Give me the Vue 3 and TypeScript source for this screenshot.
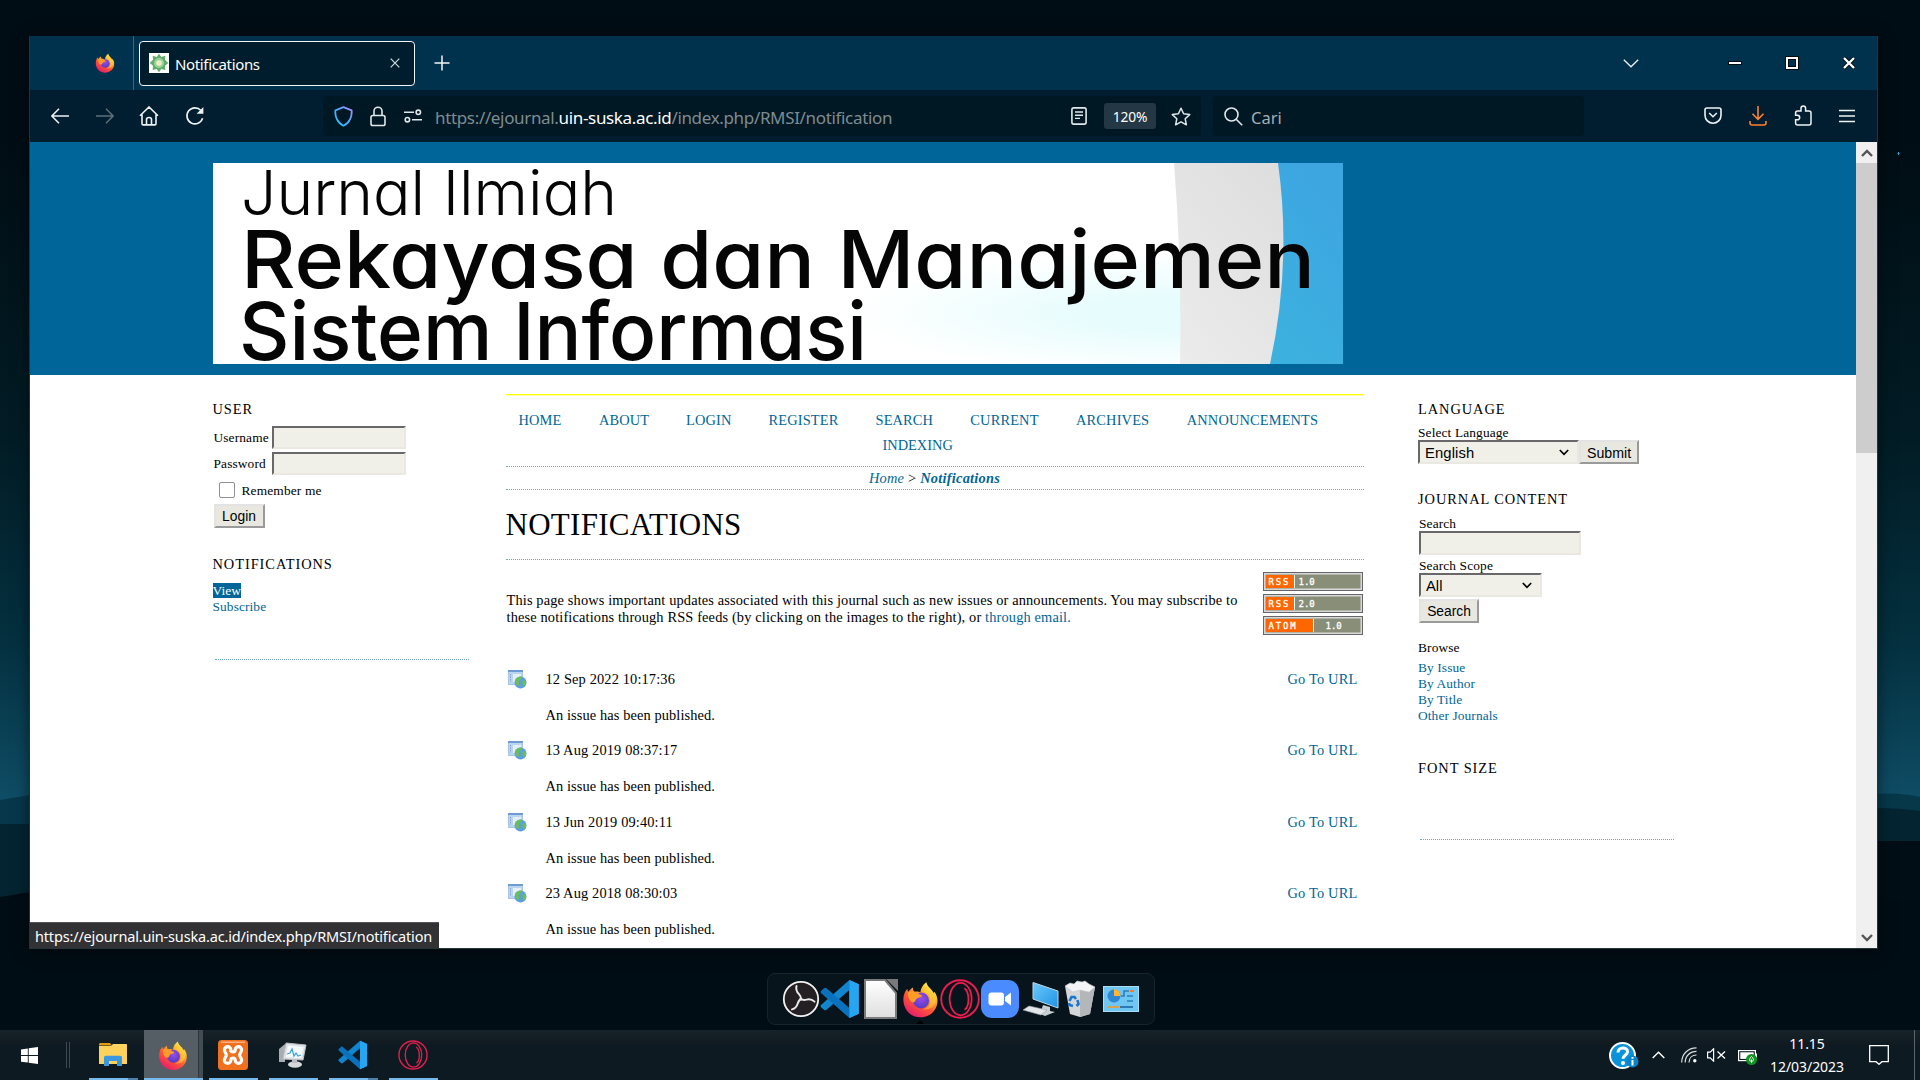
<script setup lang="ts">
interface NavItem {
  label: string
  gap: number
}

const navItems: NavItem[] = [
  { label: 'HOME', gap: 37.4 },
  { label: 'ABOUT', gap: 36.8 },
  { label: 'LOGIN', gap: 37 },
  { label: 'REGISTER', gap: 37 },
  { label: 'SEARCH', gap: 37.2 },
  { label: 'CURRENT', gap: 37.5 },
  { label: 'ARCHIVES', gap: 37.5 },
  { label: 'ANNOUNCEMENTS', gap: 0 },
]

const entries: string[] = [
  '12 Sep 2022 10:17:36',
  '13 Aug 2019 08:37:17',
  '13 Jun 2019 09:40:11',
  '23 Aug 2018 08:30:03',
]

const browseLinks: string[] = ['By Issue', 'By Author', 'By Title', 'Other Journals']

const feeds = [
  { name: 'RSS', version: '1.0', atom: false },
  { name: 'RSS', version: '2.0', atom: false },
  { name: 'ATOM', version: '1.0', atom: true },
]
</script>

<template>
  <div class="desktop">
    <!-- shared gradients and logos -->
    <svg class="defs" width="0" height="0" aria-hidden="true">
      <defs>
        <linearGradient id="ffBody" x1="0.85" y1="0.05" x2="0.25" y2="1">
          <stop offset="0" stop-color="#fff44f" />
          <stop offset="0.3" stop-color="#ffb02e" />
          <stop offset="0.6" stop-color="#ff5634" />
          <stop offset="1" stop-color="#e5186f" />
        </linearGradient>
        <radialGradient id="ffCore" cx="0.5" cy="0.35" r="0.7">
          <stop offset="0" stop-color="#a04ae8" />
          <stop offset="1" stop-color="#4a3cc4" />
        </radialGradient>
        <linearGradient id="shieldGrad" x1="0" y1="1" x2="1" y2="0">
          <stop offset="0" stop-color="#28c8f8" />
          <stop offset="0.5" stop-color="#4aa6ff" />
          <stop offset="1" stop-color="#b48cff" />
        </linearGradient>
        <linearGradient id="paper" x1="0" y1="0" x2="0" y2="1">
          <stop offset="0" stop-color="#ffffff" />
          <stop offset="1" stop-color="#dedede" />
        </linearGradient>
        <linearGradient id="sky" x1="0" y1="0" x2="1" y2="1">
          <stop offset="0" stop-color="#6cc8fa" />
          <stop offset="1" stop-color="#1f93e6" />
        </linearGradient>
        <symbol id="firefox" viewBox="0 0 32 32">
          <path d="M1.2 17C1 12 2.8 8.6 4.6 6.6c0 1.2.4 2.2 1 2.8C6.8 7.2 8.6 6.200 9.600 5.600c-.2 1.600.2 2.800 1.200 3.600 2-.4 4 0 5.200.6C16.200 6 18.600 2.600 21.200 1c.2 3.200 3.600 5 5.200 7.800.6.800.8 1 1 1.800l.6-1.400c2.200 3 3 6 2.600 9.600C29.800 26 23.600 31.400 16 31.400 8 31.400 1.600 25.200 1.200 17z" fill="url(#ffBody)" />
          <circle cx="16.500" cy="16.800" r="6.900" fill="url(#ffCore)" />
          <path d="M5.600 9.400c2-1 4-.6 5.200-.2 2 .4 3.600 1.200 4.200 2.200 2 .4 2.600 1.200 2 2-1 1-3.600.8-4.600 2.200-.8 1-.6 2-1.800 2.600C8 20 4 14 5.600 9.400z" fill="#ff9c28" />
          <path d="M18 9c3.600.6 6.200 3.600 6.400 7.400.2 4-2.200 7-6.400 8 5 1.200 11-2 11.200-8.400C29.300 11 24 6.500 21 4c1 2.500-1 4-3 5z" fill="#ffd63c" opacity="0.550" />
        </symbol>
        <symbol id="vscode" viewBox="0 0 32 32">
          <path d="M23.500.8 31 4.200v23.600l-7.500 3.400z" fill="#26a9f0" />
          <path d="M23.500.8v8L5.200 24.600c-.7.600-1.400.6-2 0L1 22.700c-.7-.7-.7-1.500 0-2.100z" fill="#1186cf" />
          <path d="M23.500 31.200v-8L5.200 7.400c-.7-.6-1.400-.6-2 0L1 9.300c-.7.700-.7 1.500 0 2.100z" fill="#0a72bd" />
          <path d="M23.500 31.200V.8L31 4.200v23.600z" fill="#26a5f0" />
        </symbol>
        <symbol id="opera" viewBox="0 0 32 32">
          <g fill="none" stroke="currentColor">
            <circle cx="16" cy="16" r="15" stroke-width="1.500" />
            <ellipse cx="16.500" cy="16" rx="8.800" ry="13" stroke-width="1.400" />
            <path d="M19.500 7.400c4 3 4.600 14 .2 17.200" stroke-width="1.400" />
          </g>
        </symbol>
      </defs>
    </svg>

    <!-- wallpaper hills -->
    <svg class="hills" width="1920" height="1080" viewBox="0 0 1920 1080" aria-hidden="true">
      <path d="M0 800 30 795V900H0z" fill="#07374a" />
      <path d="M0 824H30V930H0z" fill="#032430" />
      <path d="M0 897 30 892V960H0z" fill="#010d14" />
      <path d="M1876 794q24-2 44 3v60h-44z" fill="#06384a" />
      <path d="M1876 808q24 0 44 3v60h-44z" fill="#032430" />
      <path d="M1876 841h44v60h-44z" fill="#010e15" />
      <path d="M1897.500 153.500h2M1898.500 152v3" stroke="#1ba5cf" />
    </svg>

    <section class="window">
      <header class="titlebar">
        <svg class="tb-logo" width="20" height="20"><use href="#firefox" /></svg>
        <div class="tab">
          <svg width="20" height="20" viewBox="0 0 20 20">
            <rect width="20" height="20" fill="#fff" />
            <path d="M10 .8 12.300 4l4-1.200-.3 4L19.300 10 16 12.800l.3 4.300-4-1.100L10 19.200 7.700 16l-4 1.100.3-4.300L.7 10 4 6.800l-.3-4 4 1.200z" fill="#5fae6b" />
            <circle cx="10" cy="10" r="5" fill="#9fd09a" />
            <circle cx="10" cy="10" r="2.800" fill="#e9f0c4" />
          </svg>
          <span class="tab-title">Notifications</span>
          <svg class="tab-close" width="10" height="10" viewBox="0 0 10 10"><path d="M.7.7l8.600 8.600M9.300.7.7 9.300" stroke="#cfdbe2" stroke-width="1.200" /></svg>
        </div>
        <svg class="new-tab" width="16" height="16" viewBox="0 0 16 16"><path d="M8 .5v15M.5 8h15" stroke="#f2f6f8" stroke-width="1.500" /></svg>
        <div class="grow"></div>
        <svg class="tabs-menu" width="16" height="9" viewBox="0 0 16 9"><path d="M.8.8 8 7.800l7.200-7" fill="none" stroke="#e8eef2" stroke-width="1.400" /></svg>
        <svg class="win-min" width="14" height="14" viewBox="0 0 14 14"><rect x=".5" y="5.500" width="13" height="3" fill="#fff" stroke="#000b10" /></svg>
        <svg class="win-max" width="14" height="14" viewBox="0 0 14 14"><rect x="2" y="2" width="10" height="10" fill="none" stroke="#000b10" stroke-width="4" /><rect x="2" y="2" width="10" height="10" fill="none" stroke="#fff" stroke-width="2" /></svg>
        <svg class="win-close" width="14" height="14" viewBox="0 0 14 14"><path d="M2 2l10 10M12 2 2 12" stroke="#000b10" stroke-width="4" /><path d="M2 2l10 10M12 2 2 12" stroke="#fff" stroke-width="2.400" /></svg>
      </header>

      <div class="toolbar">
        <svg class="back" width="18" height="16" viewBox="0 0 18 16"><path d="M8 .8.900 8l7.100 7.200M1 8h17" fill="none" stroke="#eef3f6" stroke-width="1.500" /></svg>
        <svg class="fwd" width="18" height="16" viewBox="0 0 18 16"><path d="M10 .8 17.100 8 10 15.200M17 8H0" fill="none" stroke="#5d6f79" stroke-width="1.500" /></svg>
        <svg class="home" width="20" height="20" viewBox="0 0 20 20"><path d="M1 9.800 10 1l9 8.800M3 8.500v9.200c0 .7.400 1.200 1.100 1.200h11.800c.7 0 1.100-.5 1.100-1.200V8.500M7.500 18.500v-5c0-1.200 1-2 2.500-2s2.500.8 2.500 2v5" fill="none" stroke="#eef3f6" stroke-width="1.600" /></svg>
        <svg class="reload" width="20" height="20" viewBox="0 0 20 20"><path d="M17.600 12.200A8 8 0 1 1 16 4.600" fill="none" stroke="#eef3f6" stroke-width="1.600" /><path d="M18.400 1v6.800h-6.800z" fill="#eef3f6" /></svg>

        <div class="urlbar">
          <svg width="19" height="21" viewBox="0 0 19 21"><path d="M9.500 1.200 17.600 4.300c.6 6-1.800 12.600-8.100 15.500C3.200 16.900.8 10.300 1.400 4.300z" fill="none" stroke="url(#shieldGrad)" stroke-width="1.800" stroke-linejoin="round" /></svg>
          <svg class="lock" width="16" height="21" viewBox="0 0 16 21"><rect x="1" y="9.500" width="14" height="10" rx="1.800" fill="none" stroke="#dfe8ec" stroke-width="1.600" /><path d="M4 9.500V5.200a4 4 0 0 1 8 0v4.300" fill="none" stroke="#dfe8ec" stroke-width="1.600" /></svg>
          <svg class="perm" width="18" height="14" viewBox="0 0 18 14"><g fill="none" stroke="#dfe8ec" stroke-width="1.600"><path d="M0 3.300h10M8 10.700h10" /><circle cx="14.300" cy="3.300" r="2.200" /><circle cx="3.400" cy="10.700" r="2.200" /></g></svg>
          <span class="url">https://ejournal.<b>uin-suska.ac.id</b>/index.php/RMSI/notification</span>
          <svg class="reader" width="16" height="18" viewBox="0 0 16 18"><rect x=".9" y=".9" width="14.200" height="16.200" rx="1.800" fill="none" stroke="#dfe8ec" stroke-width="1.600" /><path d="M4 5h8M4 8.200h8M4 11.400h5" stroke="#dfe8ec" stroke-width="1.400" /></svg>
          <span class="zoom">120%</span>
          <svg class="star" width="20" height="19" viewBox="0 0 20 19"><path d="M10 1.200l2.600 5.600 6.100.8-4.500 4.200 1.200 6L10 14.800l-5.400 3 1.200-6L1.300 7.600l6.100-.8z" fill="none" stroke="#dfe8ec" stroke-width="1.500" stroke-linejoin="round" /></svg>
        </div>
        <div class="searchbar">
          <svg width="19" height="19" viewBox="0 0 19 19"><circle cx="7.500" cy="7.500" r="6.500" fill="none" stroke="#dfe8ec" stroke-width="1.600" /><path d="M12.200 12.200l6 6" stroke="#dfe8ec" stroke-width="1.600" /></svg>
          <span>Cari</span>
        </div>
        <div class="grow"></div>
        <div class="tools">
          <svg width="18" height="17" viewBox="0 0 18 17"><path d="M3 1h12c1.200 0 2 .8 2 2v5.200a8 8 0 0 1-16 0V3c0-1.200.8-2 2-2z" fill="none" stroke="#eef3f6" stroke-width="1.600" /><path d="M5.200 6 9 9.700 12.800 6" fill="none" stroke="#eef3f6" stroke-width="1.600" /></svg>
          <svg width="18" height="20" viewBox="0 0 18 20"><path d="M9 0v13M3.500 7.800 9 13.300l5.500-5.500M1 15v2c0 1.200.8 2 2 2h12c1.200 0 2-.8 2-2v-2" fill="none" stroke="#ff8030" stroke-width="1.600" /></svg>
          <svg width="18" height="21" viewBox="0 0 18 21"><path d="M7 6V3.200a2.300 2.300 0 0 1 4.600 0V6H15c1.200 0 2 .8 2 2v10c0 1.200-.8 2-2 2H3.600c-1.200 0-2-.8-2-2v-3.200h1.800a2.300 2.300 0 0 0 0-4.600H1.600V8c0-1.200.8-2 2-2z" fill="none" stroke="#eef3f6" stroke-width="1.500" /></svg>
          <svg width="16" height="14" viewBox="0 0 16 14"><path d="M0 1.500h16M0 7h16M0 12.500h16" stroke="#eef3f6" stroke-width="1.500" /></svg>
        </div>
      </div>

      <div class="viewport">
        <div class="page">
          <div class="page-head">
            <svg class="banner" width="1130" height="201" viewBox="0 0 1130 201">
              <defs>
                <radialGradient id="bannerBg" cx="0.86" cy="0.75" r="0.3">
                  <stop offset="0.250" stop-color="#e6fcfd" />
                  <stop offset="1" stop-color="#ffffff" />
                </radialGradient>
                <linearGradient id="bannerBlue" x1="0" y1="1" x2="0.400" y2="0">
                  <stop offset="0" stop-color="#3cb2de" />
                  <stop offset="1" stop-color="#3da6e1" />
                </linearGradient>
                <linearGradient id="bannerGrey" x1="0" y1="1" x2="1" y2="0">
                  <stop offset="0" stop-color="#ececec" />
                  <stop offset="1" stop-color="#dadada" />
                </linearGradient>
              </defs>
              <rect width="1130" height="201" fill="url(#bannerBg)" />
              <path d="M961 0q8 100 6 201h163V0z" fill="url(#bannerGrey)" />
              <path d="M1065 0q14 100-8 201h73V0z" fill="url(#bannerBlue)" />
              <g class="banner-text">
                <text x="28" y="52" font-size="62" font-weight="330" textLength="376" lengthAdjust="spacingAndGlyphs">Jurnal Ilmiah</text>
                <text x="28" y="125" font-size="80" font-weight="460" textLength="1074" lengthAdjust="spacingAndGlyphs">Rekayasa dan Manajemen</text>
                <text x="26" y="197" font-size="80" font-weight="460" textLength="628" lengthAdjust="spacingAndGlyphs">Sistem Informasi</text>
              </g>
            </svg>
          </div>

          <div class="columns">
            <aside class="left">
              <h5>USER</h5>
              <div class="field first"><label>Username</label><input type="text" class="box" /></div>
              <div class="field"><label>Password</label><input type="text" class="box" /></div>
              <div class="remember"><i class="check"></i><span>Remember me</span></div>
              <div class="btn login">Login</div>
              <h5 class="h-notif">NOTIFICATIONS</h5>
              <div class="links l-notif"><a><mark>View</mark></a><a>Subscribe</a></div>
              <div class="dots d-left"></div>
            </aside>

            <main>
              <div class="yellow"></div>
              <nav>
                <div class="nav-row"><a v-for="n in navItems" :key="n.label" :style="{ marginRight: n.gap + 'px' }">{{ n.label }}</a></div>
                <div class="nav-row second"><a>INDEXING</a></div>
              </nav>
              <div class="crumbs"><a>Home</a> &gt; <a class="cur">Notifications</a></div>
              <h1>NOTIFICATIONS</h1>
              <div class="intro">
                <p>This page shows important updates associated with this journal such as new issues or announcements. You may subscribe to<br />these notifications through RSS feeds (by clicking on the images to the right), or <a>through email.</a></p>
                <div class="feeds">
                  <div v-for="(f, i) in feeds" :key="i" class="feed" :class="{ atom: f.atom }"><b>{{ f.name }}</b><span>{{ f.version }}</span></div>
                </div>
              </div>
              <article v-for="e in entries" :key="e">
                <svg width="19" height="19" viewBox="0 0 19 19">
                  <rect x=".5" y=".5" width="14" height="14" fill="#bcd5ef" stroke="#a9c6e6" />
                  <rect x="0" y="0" width="15" height="2" fill="#6e9bd3" />
                  <path d="M5 4h8v8H5z" fill="#e6f0fb" />
                  <path d="M2.500 4v8" stroke="#7ea6d8" stroke-dasharray="1.500 1" />
                  <circle cx="12.500" cy="12.500" r="6" fill="#5b9fe0" />
                  <path d="M8 9c2-2.500 5-3 6-2 0 2-2 2-3 4s1 3 0 5c-3-1-5-4-3-7zM15 10c2 0 3 1 3.300 3-.5 2-1.500 3-2.500 3.500-1-2-2-4-.8-6.500z" fill="#6cbf52" />
                </svg>
                <div class="entry-text"><div>{{ e }}</div><div class="pub">An issue has been published.</div></div>
                <a class="goto">Go To URL</a>
              </article>
            </main>

            <aside class="right">
              <h5>LANGUAGE</h5>
              <div class="lbl l1">Select Language</div>
              <div class="lang-row">
                <div class="select s-lang"><span>English</span><svg width="10" height="7" viewBox="0 0 10 7"><path d="M.8 1 5 5.300 9.200 1" fill="none" stroke="#000" stroke-width="1.700" /></svg></div>
                <div class="btn submit">Submit</div>
              </div>
              <h5 class="h-content">JOURNAL CONTENT</h5>
              <div class="search-form">
                <div class="lbl l2">Search</div>
                <input type="text" class="box s-input" />
                <div class="lbl l3">Search Scope</div>
                <div class="select s-all"><span>All</span><svg width="10" height="7" viewBox="0 0 10 7"><path d="M.8 1 5 5.300 9.200 1" fill="none" stroke="#000" stroke-width="1.700" /></svg></div>
                <div class="btn s-btn">Search</div>
              </div>
              <div class="lbl browse">Browse</div>
              <div class="links l-browse"><a v-for="b in browseLinks" :key="b">{{ b }}</a></div>
              <h5 class="h-font">FONT SIZE</h5>
              <div class="dots d-right"></div>
            </aside>
          </div>
        </div>

        <div class="scrollbar">
          <div class="sb-btn"><svg width="12" height="8" viewBox="0 0 12 8"><path d="M1 7 6 2l5 5" fill="none" stroke="#555" stroke-width="2.400" /></svg></div>
          <div class="thumb"></div>
          <div class="grow"></div>
          <div class="sb-btn"><svg width="12" height="8" viewBox="0 0 12 8"><path d="M1 1l5 5 5-5" fill="none" stroke="#555" stroke-width="2.400" /></svg></div>
        </div>
      </div>
      <div class="status"><span>https://ejournal.uin-suska.ac.id/index.php/RMSI/notification</span></div>
    </section>

    <div class="dock">
      <svg width="38" height="38" viewBox="0 0 38 38">
        <circle cx="19" cy="19" r="17.200" fill="#231f22" stroke="#f2f2f2" stroke-width="1.800" />
        <g fill="none" stroke="#e8e8e8" stroke-width="2" stroke-linecap="round">
          <path d="M19 19.500C20 13.500 12.500 14 14.500 6" />
          <path d="M19 19.500C20 13.500 12.500 14 14.500 6" transform="rotate(120 19 19)" />
          <path d="M19 19.500C20 13.500 12.500 14 14.500 6" transform="rotate(240 19 19)" />
        </g>
      </svg>
      <svg class="dk-code" width="40" height="40"><use href="#vscode" /></svg>
      <svg class="dk-doc" width="34" height="40" viewBox="0 0 34 40"><path d="M1 1h20l11 13v25H1z" fill="url(#paper)" stroke="#7a7a7a" stroke-width="2" /><path d="M22 0h12v12z" fill="#7b7878" /></svg>
      <svg class="dk-ff" width="37" height="39"><use href="#firefox" /></svg>
      <svg class="dk-opera" width="40" height="40"><use href="#opera" /></svg>
      <svg class="dk-zoom" width="38" height="38" viewBox="0 0 38 38"><rect width="38" height="38" rx="11" fill="#4a8cff" /><rect x="7.500" y="12.500" width="15.500" height="13" rx="3" fill="#fff" /><path d="M24 17l6-4.500v13L24 21z" fill="#fff" /></svg>
      <svg class="dk-pc" width="36" height="36" viewBox="0 0 36 36"><path d="M10 1.500 35 10v17L10 18z" fill="url(#sky)" stroke="#bcd8e8" /><path d="M20 24l7 2v4l5 1-10 4-5-2z" fill="#c9d0d4" /><path d="M0 29l6-4 18 4-6 5z" fill="#e3e7ea" stroke="#98a2a8" stroke-width=".6" /></svg>
      <svg class="dk-bin" width="34" height="38" viewBox="0 0 34 38"><path d="M2 6l5 28 10 3 10-3 5-27-15 3z" fill="#d4d6d8" /><path d="M17 10l15-3-5 27-10 3z" fill="#b3b7ba" /><path d="M2 6l5-3 4 1 3-3 5 1 3-1 4 3 6 3-6 5-9-2-7 2z" fill="#f3f4f5" stroke="#c5c8ca" stroke-width=".6" /><path d="M6.500 21l2-4h3l1.500 2M14.500 20l1 4-2 2M10 26l-3.500-1-.5-2" fill="none" stroke="#1976d2" stroke-width="2.600" /></svg>
      <svg class="dk-cp" width="36" height="26" viewBox="0 0 36 26"><rect x=".5" y=".5" width="35" height="25" fill="#6fc6f3" stroke="#a9def8" /><circle cx="11" cy="10" r="6.500" fill="#2f86d2" /><path d="M11 10V3a7 7 0 0 1 6.500 7z" fill="#ffb52e" /><path d="M18 10h3V5h5M24 10h6M24 15h6" fill="none" stroke="#2c7fb8" stroke-width="1.600" /><path d="M27 5h4" stroke="#f07b2a" stroke-width="2" /><path d="M4 21h12" stroke="#ef9a2c" stroke-width="1.600" /><path d="M17 21h13" stroke="#1a67a8" stroke-width="1.600" /></svg>
      <i class="dock-arrow"></i>
    </div>

    <footer class="taskbar">
      <svg class="start" width="17" height="17" viewBox="0 0 17 17"><path d="M0 2.400 6.800 1.400v6.700H0zM7.700 1.300 17 0v8.100H7.700zM0 9h6.800v6.600L0 14.700zM7.700 9H17v8l-9.300-1.300z" fill="#fff" /></svg>
      <div class="seps"></div>
      <div class="task t-files split">
        <svg width="28" height="24" viewBox="0 0 28 24"><path d="M0 1.500C0 .7.500 0 1.400 0H11l2 2.500H0z" fill="#e09c0c" /><path d="M0 3h12l2-2h13c.6 0 1 .4 1 1v19H0z" fill="#fdd561" /><path d="M0 3h28v18H0z" fill="#fccf58" opacity=".6" /><path d="M5 23v-8.500c0-1 .8-1.800 1.800-1.800h14.400c1 0 1.800.8 1.800 1.800V23h-5v-5h-8v5z" fill="#3a97e0" /></svg>
      </div>
      <div class="task t-ff active"><svg width="30" height="31"><use href="#firefox" /></svg></div>
      <div class="task t-xampp">
        <svg width="30" height="30" viewBox="0 0 30 30"><rect width="30" height="30" rx="3.500" fill="#f1701e" /><path d="M3 1.500h24v1.500H3z" fill="#fbb184" /><path d="M12.800 12V9.800a3.200 3.200 0 0 0-6.400 0c0 2.600 1.900 3 1.900 5.200s-1.900 2.600-1.900 5.200a3.200 3.200 0 0 0 6.400 0c0-1.600 1-2.200 2.200-2.200s2.200.6 2.200 2.200a3.200 3.200 0 0 0 6.400 0c0-2.600-1.900-3-1.900-5.200s1.900-2.600 1.900-5.200a3.200 3.200 0 0 0-6.400 0c0 1.600-1 2.200-2.200 2.200s-2.200-.6-2.200-2.200" fill="none" stroke="#fff" stroke-width="3.200" /></svg>
      </div>
      <div class="task t-mon">
        <svg width="28" height="26" viewBox="0 0 28 26"><path d="M0 7l6-5v18H0z" fill="#a9adb0" /><path d="M7 1l20 2-3 15-20-1z" fill="#dfe3e6" stroke="#b9bfc3" /><path d="M9 3.500l15.500 1.500-2.300 11L7 15z" fill="#f4fafd" /><path d="M8 12l3-1 2-4 2 7 2-3 2 3 3-1" fill="none" stroke="#3f9fd8" stroke-width="1.200" /><ellipse cx="16" cy="22.500" rx="7" ry="3.300" fill="#d7dadc" /><path d="M13 17h5v4h-5z" fill="#bcc0c3" /></svg>
      </div>
      <div class="task t-code split"><svg width="30" height="30"><use href="#vscode" /></svg></div>
      <div class="task t-opera"><svg width="30" height="30"><use href="#opera" /></svg></div>
      <div class="grow"></div>

      <svg class="help" width="30" height="28" viewBox="0 0 30 28">
        <circle cx="13.500" cy="13.500" r="12.500" fill="#0a93d8" stroke="#fff" stroke-width="2" />
        <path d="M9 10.500c0-6 9.500-6 9.500-.8 0 3.500-4.500 3.500-4.500 7" fill="none" stroke="#fff" stroke-width="3" /><circle cx="14" cy="21" r="2" fill="#fff" />
        <circle cx="23.500" cy="19.500" r="6" fill="#0a83c8" /><path d="M23.500 18v5.500M23.500 15v1.800" stroke="#fff" stroke-width="2" />
      </svg>
      <svg class="up" width="13" height="8" viewBox="0 0 13 8"><path d="M.7 7 6.500 1.200 12.300 7" fill="none" stroke="#fff" stroke-width="1.400" /></svg>
      <svg class="wifi" width="16" height="16" viewBox="0 0 16 16"><g fill="none" stroke="#d8dde0" stroke-width="1.200"><path d="M.7 15.500C.7 7 7 .8 15.500.8M4.200 15.500C4.200 9 9 4.400 15.500 4.400M8 15.500c0-4.500 3-7.500 7.500-7.500" /></g><circle cx="13.800" cy="13.800" r="1.700" fill="#fff" /></svg>
      <svg class="vol" width="19" height="14" viewBox="0 0 19 14"><path d="M.6 4.200h2.600L6.600.8v12.400L3.200 9.800H.6z" fill="none" stroke="#fff" stroke-width="1.200" /><path d="M10.500 3.500l7.500 7M18 3.500l-7.500 7" stroke="#fff" stroke-width="1.300" /></svg>
      <svg class="bat" width="20" height="15" viewBox="0 0 20 15"><rect x=".6" y=".6" width="16.800" height="10" fill="none" stroke="#fff" stroke-width="1.200" /><rect x="2.300" y="2.300" width="13.400" height="6.600" fill="#fff" /><path d="M18.500 3.500v4" stroke="#fff" /><circle cx="13.500" cy="9.500" r="5.500" fill="#129422" /><path d="M13.500 6.500c3 2.500 2 5 0 5s-3-2.500 0-5zM13.500 9.500V13" fill="none" stroke="#fff" /></svg>
      <div class="clock"><span>11.15</span><span class="date">12/03/2023</span></div>
      <svg class="notif" width="20" height="20" viewBox="0 0 20 20"><path d="M.7.700h18.600v16h-6.300l-3 2.600-3-2.600H.7z" fill="none" stroke="#fff" stroke-width="1.300" /></svg>
      <div class="peek"></div>
    </footer>
  </div>
</template>

<style>
html,
body {
  margin: 0;
  background: #010d14;
}
</style>

<style scoped>
.desktop {
  position: relative;
  width: 1920px;
  height: 1080px;
  overflow: hidden;
  background: linear-gradient(#010d14 0, #010d14 140px, #021c25 440px, #04303f 640px, #0a4054 730px, #0f4d66 800px, #010d14 860px, #010d14 100%);
  font-family: 'Noto Sans', 'Open Sans', sans-serif;
}
.defs,
.hills {
  position: absolute;
  left: 0;
  top: 0;
}
svg {
  display: block;
  flex: none;
}
.grow {
  flex: 1;
}

/* browser window */
.window {
  position: absolute;
  left: 29px;
  top: 36px;
  width: 1847px;
  height: 912px;
  border: solid #24343c;
  border-width: 0 1px 1px;
  box-shadow: 0 2px 14px rgba(0, 0, 0, 0.5);
  display: flex;
  flex-direction: column;
  background: #fff;
}
.titlebar {
  display: flex;
  align-items: center;
  height: 54px;
  background: #00324e;
  flex: none;
}
.tb-logo {
  margin-left: 65px;
}
.tab {
  display: flex;
  align-items: center;
  box-sizing: border-box;
  width: 276px;
  height: 45px;
  margin-left: 24px;
  border: 1px solid #f0f4f6;
  border-radius: 4px;
  background: #001d2e;
  padding: 0 14px 0 9px;
  position: relative;
}
.tab::before {
  content: '';
  position: absolute;
  left: -7px;
  top: -6px;
  width: 1px;
  height: 54px;
  background: #3f6379;
}
.tab-title {
  flex: 1;
  margin-left: 6px;
  padding-top: 2px;
  color: #fff;
  font-size: 15px;
  letter-spacing: -0.35px;
}
.new-tab {
  margin-left: 19px;
}
.tabs-menu {
  margin-right: 89px;
}
.win-min {
  margin-right: 43px;
}
.win-max {
  margin-right: 43px;
}
.win-close {
  margin-right: 21px;
}

.toolbar {
  display: flex;
  align-items: center;
  height: 52px;
  flex: none;
  background: #001e2f;
}
.back {
  margin-left: 21px;
}
.fwd {
  margin-left: 27px;
}
.home {
  margin-left: 25px;
}
.reload {
  margin-left: 26px;
}
.urlbar {
  display: flex;
  align-items: center;
  box-sizing: border-box;
  width: 878px;
  height: 40px;
  margin-left: 118px;
  border-radius: 4px;
  background: #001823;
  padding-left: 11px;
}
.lock {
  margin-left: 17px;
}
.perm {
  margin-left: 18px;
}
.url {
  width: 636px;
  margin-left: 13px;
  padding-top: 2px;
  font-size: 17px;
  letter-spacing: -0.34px;
  color: #7f8b91;
  white-space: nowrap;
}
.url b {
  font-weight: 400;
  color: #fff;
}
.zoom {
  width: 52px;
  height: 26px;
  line-height: 27px;
  margin: 0 15px 0 17px;
  border-radius: 3px;
  background: #233744;
  color: #fff;
  font-size: 13.8px;
  letter-spacing: -0.2px;
  text-align: center;
}
.searchbar {
  display: flex;
  align-items: center;
  box-sizing: border-box;
  width: 371px;
  height: 40px;
  margin-left: 12px;
  border-radius: 4px;
  background: #001823;
  padding-left: 11px;
  color: #a3afb5;
  font-size: 16.5px;
}
.searchbar span {
  margin-left: 8px;
  padding-top: 2px;
}
.tools {
  display: flex;
  align-items: center;
  gap: 27px;
  margin-right: 22px;
  padding-bottom: 1px;
}

.viewport {
  display: flex;
  flex: 1;
  min-height: 0;
}
.page {
  flex: 1;
  min-width: 0;
  overflow: hidden;
  background: #fff;
  color: #000;
  font-family: 'Liberation Serif', 'Times New Roman', serif;
  font-size: 14.4px;
}
.page-head {
  height: 233px;
  background: #006699;
  box-sizing: border-box;
  padding: 21px 0 0 183px;
}
.banner {
  overflow: visible;
}
.banner-text {
  font-family: Inter, sans-serif;
  font-feature-settings: 'cv11';
  fill: #050505;
}
.columns {
  display: flex;
  align-items: flex-start;
}
a {
  color: #006699;
}

.left {
  width: 293px;
  padding: 24px 0 0 182.5px;
  box-sizing: content-box;
}
h5 {
  margin: 0;
  font-size: 14.4px;
  font-weight: 400;
  line-height: 20px;
  letter-spacing: 0.95px;
  white-space: nowrap;
}
.field {
  display: flex;
  margin: 3px 0 0 1px;
  height: 23px;
  line-height: 23px;
  font-size: 13.4px;
}
.field.first {
  margin-top: 7px;
}
.field label {
  width: 58.500px;
  letter-spacing: 0.12px;
}
.box {
  display: block;
  box-sizing: border-box;
  width: 134px;
  height: 23px;
  margin: 0;
  padding: 0;
  border: 2px solid;
  border-color: #68686b #e9e9e2 #e9e9e2 #68686b;
  border-radius: 0;
  background: #f0f0e8;
}
.remember {
  display: flex;
  align-items: center;
  height: 20px;
  margin: 5px 0 0 6px;
  font-size: 13.4px;
  letter-spacing: 0.15px;
}
.remember span {
  padding-top: 2px;
}
.check {
  box-sizing: border-box;
  width: 16px;
  height: 16px;
  margin-right: 7px;
  border: 1.5px solid #8f8f9d;
  border-radius: 2px;
}
.btn {
  box-sizing: border-box;
  height: 24px;
  line-height: 21px;
  border: 2px solid;
  border-color: #e3e3e3 #9a9a9a #9a9a9a #e3e3e3;
  background: #e8e8e0;
  font-family: 'Liberation Sans', Arial, sans-serif;
  font-size: 14.2px;
  text-align: center;
  color: #000;
}
.login {
  width: 51px;
  margin: 4px 0 0 1px;
  font-size: 13.8px;
}
.h-notif {
  margin-top: 26px;
}
.links {
  display: flex;
  flex-direction: column;
  align-items: flex-start;
  font-size: 13.4px;
  line-height: 16px;
  letter-spacing: 0.1px;
}
.l-notif {
  margin-top: 9px;
}
mark {
  display: block;
  height: 15px;
  line-height: 15px;
  margin-bottom: 1px;
  background: #006699;
  color: #fff;
}
.dots {
  border-top: 1px dotted #6ea8c0;
}
.d-left {
  width: 254px;
  margin: 44px 0 0 2px;
}

main {
  width: 858px;
}
.yellow {
  height: 1px;
  margin-top: 19px;
  background: #ffff00;
  border-bottom: 1px solid #ffffa8;
}
nav {
  margin-top: 12px;
  height: 58px;
}
.nav-row {
  display: flex;
  height: 25px;
  line-height: 25px;
  padding-left: 13px;
  letter-spacing: 0.15px;
  white-space: nowrap;
}
.nav-row.second {
  padding-left: 377px;
  letter-spacing: 0;
}
.crumbs {
  height: 22px;
  line-height: 22px;
  border: dotted #6ea8c0;
  border-width: 1px 0;
  letter-spacing: 0.24px;
  text-align: center;
}
.crumbs a {
  font-style: italic;
}
.crumbs .cur {
  font-weight: 700;
}
h1 {
  margin: 0;
  height: 40px;
  padding: 15px 0 14px;
  border-bottom: 1px dotted #6ea8c0;
  font-size: 31px;
  line-height: 40px;
  font-weight: 400;
  letter-spacing: 0.28px;
}
.intro {
  display: flex;
  height: 109px;
}
.intro p {
  margin: 32px 0 0 1px;
  width: 756px;
  line-height: 17px;
  letter-spacing: 0.137px;
  white-space: nowrap;
}
.feeds {
  display: flex;
  flex-direction: column;
  gap: 3px;
  padding-top: 12px;
}
.feed {
  display: flex;
  box-sizing: border-box;
  width: 100px;
  height: 19px;
  padding: 1px;
  border: 1px solid #66666a;
  background: #898e79;
  box-shadow: inset 0 0 0 1.5px #d8d8d8;
  font-family: 'DejaVu Sans Mono', monospace;
  font-size: 9px;
  line-height: 16px;
  color: #fff;
}
.feed b {
  box-sizing: content-box;
  width: 25px;
  margin: 1px 0 1px 1px;
  line-height: 14px;
  padding-left: 3px;
  border-right: 1px solid #fff;
  background: #ff6600;
  letter-spacing: 1.8px;
  font-weight: 400;
  -webkit-text-stroke: 0.3px #fff;
}
.feed.atom b {
  width: 44px;
}
.feed span {
  margin-left: 4px;
  -webkit-text-stroke: 0.3px #fff;
}
.feed.atom span {
  margin-left: 12px;
}
article {
  display: flex;
  height: 71.3px;
  line-height: 20px;
}
article svg {
  margin: 1px 19px 0 2px;
}
.entry-text {
  flex: 1;
  letter-spacing: 0.14px;
}
.pub {
  margin-top: 16px;
  letter-spacing: 0.1px;
}
.goto {
  margin-right: 6px;
  letter-spacing: 0.2px;
}

.right {
  margin-left: 54.5px;
  padding-top: 24px;
  width: 260px;
}
.lbl {
  font-size: 13.4px;
  line-height: 17px;
  height: 16px;
  letter-spacing: 0.12px;
}
.l1 {
  margin-top: 5px;
}
.lang-row {
  display: flex;
}
.select {
  display: flex;
  align-items: center;
  justify-content: space-between;
  box-sizing: border-box;
  height: 24px;
  padding: 0 8px 0 5px;
  border: 2px solid;
  border-color: #68686b #e9e9e2 #e9e9e2 #68686b;
  background: #f0f0e8;
  color: #000;
  font-family: 'Liberation Sans', Arial, sans-serif;
  font-size: 14.8px;
}
.select span {
  padding-top: 1px;
}
.s-lang {
  width: 161px;
  letter-spacing: 0.1px;
}
.submit {
  width: 60px;
  line-height: 22px;
}
.h-content {
  margin-top: 25px;
}
.search-form {
  margin: 6px 0 0 1px;
}
.s-input {
  width: 162px;
  height: 24px;
}
.l3 {
  margin-top: 2px;
}
.s-all {
  width: 123px;
}
.s-btn {
  width: 60px;
  margin-top: 2px;
  font-size: 13.8px;
}
.browse {
  margin-top: 16px;
}
.l-browse {
  margin-top: 5px;
}
.h-font {
  margin-top: 34px;
}
.d-right {
  width: 254px;
  margin: 61px 0 0 2px;
}

.scrollbar {
  display: flex;
  flex-direction: column;
  width: 21px;
  background: #f0f0f0;
}
.sb-btn {
  display: flex;
  align-items: center;
  justify-content: center;
  height: 21px;
}
.thumb {
  height: 290px;
  background: #cdcdcd;
}
.status {
  position: absolute;
  left: 0;
  bottom: 0;
  box-sizing: border-box;
  width: 409px;
  height: 26px;
  padding-left: 5px;
  border-top: 1px solid #55555a;
  background: #323234;
  color: #fff;
  font-size: 14.5px;
  letter-spacing: -0.17px;
  line-height: 27px;
  white-space: nowrap;
}

/* dock */
.dock {
  position: absolute;
  left: 767px;
  top: 973px;
  box-sizing: border-box;
  width: 388px;
  height: 52px;
  padding: 0 0 0 14px;
  display: flex;
  align-items: center;
  border: 1px solid #17242b;
  border-radius: 8px;
  background: #07141c;
}
.dk-doc {
  margin-left: 4px;
}
.dk-ff {
  margin-left: 4px;
}
.dk-opera {
  margin-left: 1px;
  color: #f01c4f;
}
.dk-zoom {
  margin-left: 1px;
}
.dk-pc {
  margin-left: 4px;
}
.dk-bin {
  margin-left: 4px;
}
.dk-cp {
  margin-left: 6px;
}
.dock-arrow {
  position: absolute;
  left: 148px;
  bottom: 0;
  border: 4px solid transparent;
  border-top: 0;
  border-bottom-color: #000;
}

/* taskbar */
.taskbar {
  position: absolute;
  left: 0;
  top: 1030px;
  width: 1920px;
  height: 50px;
  display: flex;
  align-items: center;
  background: linear-gradient(#172229, #0e1a21 16px, #0e1a21);
  color: #fff;
}
.start {
  margin-left: 21px;
}
.seps {
  width: 2px;
  height: 26px;
  margin: 0 19px 0 28px;
  border: solid #3e494f;
  border-width: 0 1px;
}
.task {
  display: flex;
  align-items: center;
  justify-content: center;
  box-sizing: border-box;
  width: 49px;
  height: 50px;
  padding: 2px 2px 0 0;
  border-bottom: 2px solid #76b9ed;
}
.task + .task {
  margin-left: 11px;
}
.t-ff.active {
  width: 59px;
  margin-left: 6px;
  padding-right: 2px;
  background: linear-gradient(90deg, #555e65 54px, #2f383e 54px, #2f383e 55px, #434c53 55px);
}
.t-ff + .t-xampp {
  margin-left: 6px;
}
.split {
  border-image: linear-gradient(90deg, #76b9ed 78%, #4d81aa 78%) 2;
  border-width: 0 0 2px;
  border-style: solid;
}
.t-opera {
  color: #e0204e;
}
.help {
  margin-top: 2px;
}
.up {
  margin-left: 13px;
}
.wifi {
  margin-left: 16px;
}
.vol {
  margin-left: 10px;
}
.bat {
  margin: 4px 0 0 12px;
}
.clock {
  display: flex;
  flex-direction: column;
  align-items: center;
  width: 76px;
  margin-left: 11px;
  font-size: 14px;
  line-height: 23px;
  letter-spacing: -0.05px;
}
.notif {
  margin-left: 24px;
}
.peek {
  width: 5px;
  height: 50px;
  margin-left: 25px;
  border-left: 1px solid #5a646a;
}
</style>
